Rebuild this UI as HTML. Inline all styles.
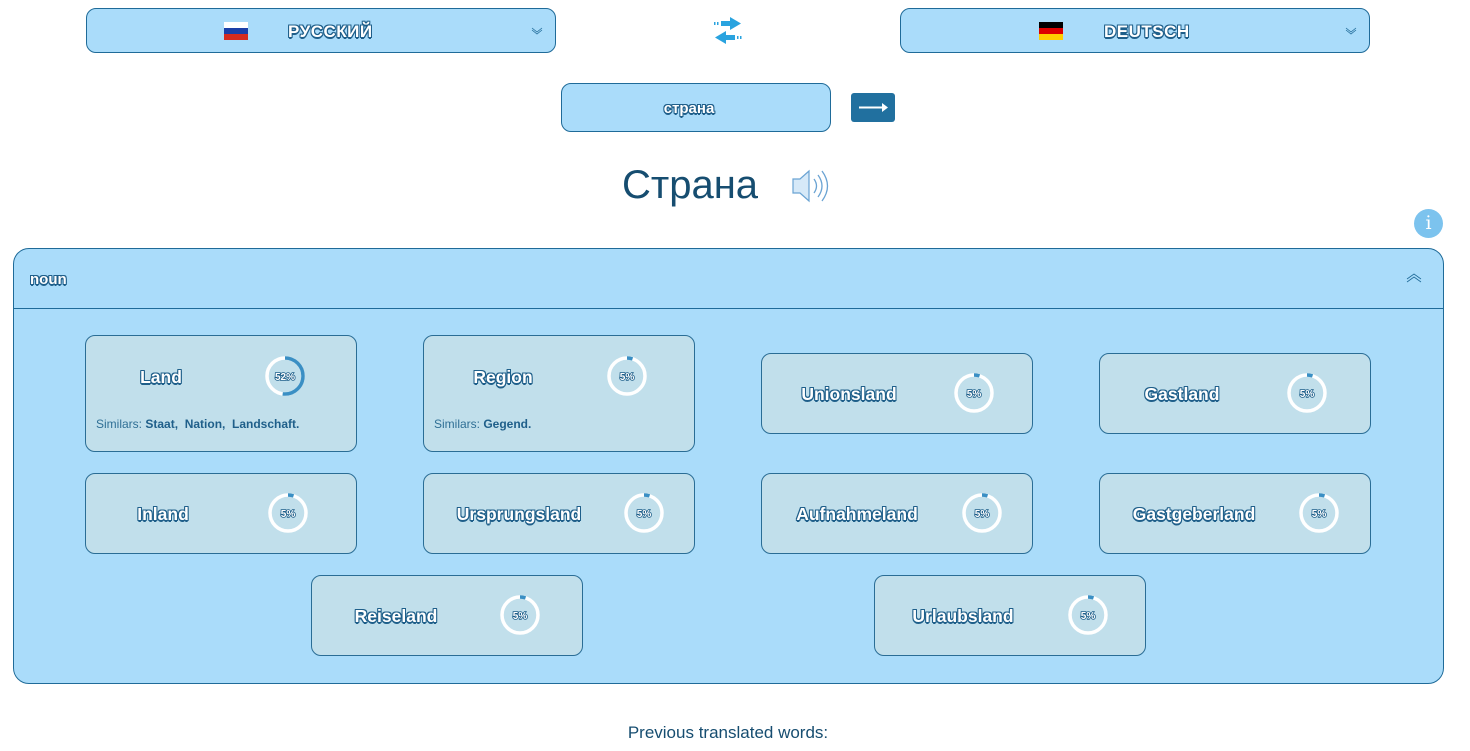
<!DOCTYPE html>
<html><head><meta charset="utf-8"><style>
body{margin:0;width:1470px;height:751px;background:#fff;font-family:"Liberation Sans","DejaVu Sans",sans-serif;position:relative;overflow:hidden}
.a{position:absolute;box-sizing:border-box}
.sel{background:#aadcfa;border:1px solid #1f6b99;border-radius:10px;height:45px;top:8px}
.ol{color:#fff;font-weight:bold;text-shadow:-1px -1px 0 #1f5f8a,1px -1px 0 #1f5f8a,-1px 1px 0 #1f5f8a,1px 1px 0 #1f5f8a,0 1px 0 #1f5f8a,0 -1px 0 #1f5f8a,1px 0 0 #1f5f8a,-1px 0 0 #1f5f8a,0 2px 0 #1f5f8a}
.card{background:#c1dfeb;border:1px solid #2a6d95;border-radius:10px;width:272px}
.w{font-size:17px;position:absolute;text-align:center}
.sim{position:absolute;left:10px;top:81px;font-size:12px;color:#2f6f95}
.sim b{color:#1f5f8a;font-weight:bold}
</style></head><body>
<div class="a sel" style="left:86px;width:470px">
 <div class="a" style="left:137px;top:13px;width:24px;height:18px"><div style="height:6px;background:#fff"></div><div style="height:6px;background:#1a3fa8"></div><div style="height:6px;background:#d52b1e"></div></div>
 <div class="a ol" style="left:201px;top:13px;font-size:17px;letter-spacing:0.5px">РУССКИЙ</div>
 <svg class="a" style="left:444px;top:18px" width="12" height="8"><path d="M1 1l5 4 5-4M1 3l5 4 5-4" stroke="#1f6b99" fill="none" stroke-width="0.8"/></svg>
</div>
<svg class="a" style="left:712px;top:16px" width="32" height="30"><g fill="#2aa3df"><rect x="9" y="5" width="10" height="5"/><path d="M18 1l11 6.5-11 6.5z"/><rect x="2" y="6" width="1.5" height="3"/><rect x="5" y="6" width="1.5" height="3"/><rect x="13" y="19" width="10" height="5"/><path d="M14 15L3 21.5 14 28z"/><rect x="25" y="20" width="1.5" height="3"/><rect x="28" y="20" width="1.5" height="3"/></g></svg>
<div class="a sel" style="left:900px;width:470px">
 <div class="a" style="left:138px;top:13px;width:24px;height:18px"><div style="height:6px;background:#000"></div><div style="height:6px;background:#dd0000"></div><div style="height:6px;background:#ffce00"></div></div>
 <div class="a ol" style="left:203px;top:13px;font-size:17px;letter-spacing:0.5px">DEUTSCH</div>
 <svg class="a" style="left:444px;top:18px" width="12" height="8"><path d="M1 1l5 4 5-4M1 3l5 4 5-4" stroke="#1f6b99" fill="none" stroke-width="0.8"/></svg>
</div>
<div class="a" style="left:561px;top:83px;width:270px;height:49px;background:#aadcfa;border:1px solid #1f6b99;border-radius:10px"><div class="ol" style="text-align:center;margin-top:16px;font-size:15px;margin-left:-14px">страна</div></div>
<div class="a" style="left:851px;top:93px;width:44px;height:29px;background:#21709f;border-radius:3px"><svg width="44" height="29"><path d="M8 14.5h26" stroke="#fff" stroke-width="2"/><path d="M31 10l6 4.5-6 4.5z" fill="#fff"/></svg></div>
<div class="a" style="left:622px;top:163px;font-size:40px;color:#164d70">Страна</div>
<svg class="a" style="left:790px;top:166px" width="42" height="40"><path d="M3 13h7l9-8v30l-9-8H3z" fill="#d6e9f8" stroke="#6aa3d3" stroke-width="1.2"/><path d="M24 13q5 7 0 14M28 9q8 11 0 22M32 5q11 15 0 30" stroke="#6aa3d3" fill="none" stroke-width="1.3"/></svg>
<div class="a" style="left:1414px;top:209px;width:29px;height:29px;border-radius:50%;background:#7cc3ee;color:#fff;font-size:19px;text-align:center;line-height:29px;font-family:'DejaVu Serif',serif">i</div>
<div class="a" style="left:13px;top:248px;width:1431px;height:436px;background:#aadcfa;border:1px solid #1f6b99;border-radius:16px">
 <div class="a ol" style="left:16px;top:22px;font-size:15px">noun</div>
 <svg class="a" style="left:1392px;top:24px" width="16" height="10"><path d="M1 6l7-5 7 5M1 9l7-5 7 5" stroke="#1f6b99" fill="none" stroke-width="0.8"/></svg>
 <div class="a" style="left:0;top:59px;width:100%;height:1px;background:#1f6b99"></div>
</div>
<script>
const cards=[
 [85,335,117,"Land",52,"Staat, Nation, Landschaft.",160,376,284,376],
 [423,335,117,"Region",5,"Gegend.",502,376,626,376],
 [761,353,81,"Unionsland",5,null,848,393,973,393],
 [1099,353,81,"Gastland",5,null,1181,393,1306,393],
 [85,473,81,"Inland",5,null,162,513,287,513],
 [423,473,81,"Ursprungsland",5,null,518,513,643,513],
 [761,473,81,"Aufnahmeland",5,null,856,513,981,513],
 [1099,473,81,"Gastgeberland",5,null,1193,513,1318,513],
 [311,575,81,"Reiseland",5,null,395,615,519,615],
 [874,575,81,"Urlaubsland",5,null,962,615,1087,615]];
let h="";
for(const c of cards){
 const [x,y,hh,w,p,s,tx,ty,cx,cy]=c;
 h+=`<div class="a card" style="left:${x}px;top:${y}px;height:${hh}px">`;
 h+=`<div class="w ol" style="left:${tx-x-100}px;width:200px;top:${ty-y-10}px;font-size:17.5px">${w}</div>`;
 const r=18,L=2*Math.PI*r;
 h+=`<svg class="a" style="left:${cx-x-21}px;top:${cy-y-22}px" width="42" height="42"><circle cx="21" cy="21" r="${r}" fill="none" stroke="#fff" stroke-width="3.5"/><circle cx="21" cy="21" r="${r}" fill="none" stroke="#3a8fc4" stroke-width="3.5" stroke-dasharray="${L*p/100} ${L}" transform="rotate(-90 21 21)"/><text x="21" y="25" text-anchor="middle" font-size="10" font-weight="bold" fill="#fff" stroke="#1f5f8a" stroke-width="1.6" paint-order="stroke" font-family="Liberation Sans">${p}%</text></svg>`;
 if(s)h+=`<div class="sim">Similars: <b>${s.split(", ").join(",&nbsp; ")}</b></div>`;
 h+=`</div>`;
}
document.write(h);
</script>
<div class="a" style="left:0;width:1456px;top:723px;text-align:center;font-size:17px;color:#164d70">Previous translated words:</div>
</body></html>
